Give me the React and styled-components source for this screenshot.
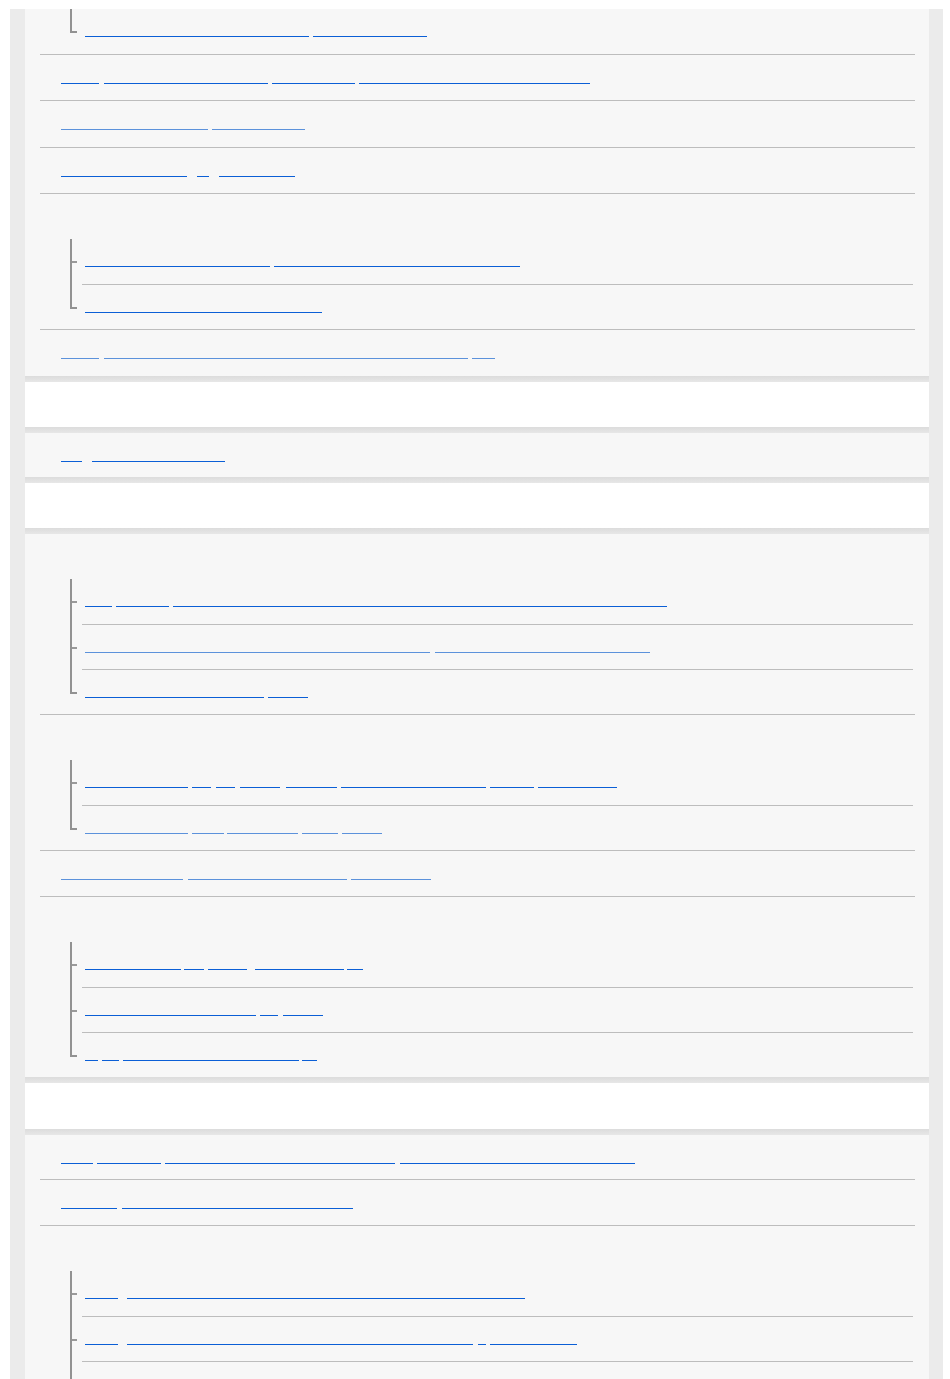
import React from "react";
import styled, { createGlobalStyle } from "styled-components";

const GlobalStyle = createGlobalStyle`
  html, body {
    margin: 0;
    padding: 0;
    background: #ffffff;
  }
  body {
    font-family: "Liberation Sans", Arial, sans-serif;
  }
`;

// tones of the link underline
const DARK = "#0b5fd6";
const LIGHT = "#5c92db";
const RULE = "#bdbdbd";

// x ranges of each underlined word, in page pixels
const sections = [
  {
    kind: "panel",
    items: [
      { type: "group", cropped: true, subs: [{ tone: DARK, words: [[85, 309], [313, 427]] }] },
      { type: "row", tone: DARK, words: [[61, 99], [104, 268], [272, 355], [359, 590]] },
      { type: "row", tone: LIGHT, words: [[61, 208], [212, 305]] },
      { type: "row", tone: DARK, words: [[61, 187], [197, 209], [219, 295]] },
      {
        type: "group",
        subs: [
          { tone: DARK, words: [[85, 270], [274, 520]] },
          { tone: DARK, words: [[85, 322]] },
        ],
      },
      { type: "row", tone: LIGHT, words: [[61, 99], [104, 468], [472, 495]] },
    ],
  },
  { kind: "header", height: 45 },
  {
    kind: "panel",
    items: [{ type: "row", tone: DARK, words: [[61, 82], [92, 225]] }],
  },
  { kind: "header", height: 45 },
  {
    kind: "panel",
    items: [
      {
        type: "group",
        subs: [
          { tone: DARK, words: [[85, 112], [116, 169], [173, 667]] },
          { tone: LIGHT, words: [[85, 430], [435, 650]] },
          { tone: DARK, words: [[85, 264], [268, 308]] },
        ],
      },
      {
        type: "group",
        subs: [
          {
            tone: DARK,
            words: [[85, 188], [192, 211], [216, 235], [240, 280], [286, 337], [341, 486], [490, 534], [538, 617]],
          },
          { tone: LIGHT, words: [[85, 188], [192, 224], [227, 298], [302, 338], [342, 382]] },
        ],
      },
      { type: "row", tone: LIGHT, words: [[61, 183], [188, 347], [351, 431]] },
      {
        type: "group",
        subs: [
          { tone: DARK, words: [[85, 181], [184, 204], [208, 247], [255, 344], [347, 363]] },
          { tone: DARK, words: [[85, 256], [260, 278], [283, 323]] },
          { tone: DARK, words: [[85, 98], [102, 119], [123, 299], [302, 317]] },
        ],
      },
    ],
  },
  { kind: "header", height: 46 },
  {
    kind: "panel",
    items: [
      { type: "row", tone: DARK, words: [[61, 93], [97, 161], [165, 395], [400, 635]] },
      { type: "row", tone: DARK, words: [[61, 117], [122, 353]] },
      {
        type: "group",
        subs: [
          { tone: DARK, words: [[85, 118], [127, 525]] },
          { tone: DARK, words: [[85, 118], [127, 473], [478, 486], [490, 577]] },
          { tone: DARK, words: [[85, 200]] },
        ],
      },
    ],
  },
];

const Page = styled.div`
  padding: 9px 0 0 10px;
`;

const Frame = styled.div`
  width: 933px;
  box-sizing: border-box;
  background: #ebebeb;
  padding: 0 14px 0 15px;
`;

const Bar = styled.div`
  height: 6px;
  background: linear-gradient(#dcdcdc, #e7e7e7);
`;

const Header = styled.div`
  height: ${(p) => p.$height}px;
  background: #ffffff;
`;

const Panel = styled.ul`
  list-style: none;
  margin: 0;
  padding: 0 14px 0 15px;
  background: #f7f7f7;
`;

const Row = styled.li`
  box-sizing: border-box;
  height: ${(p) => (p.$first ? "44px" : "46.4px")};
  padding: 28px 0 0 21px;
  border-top: ${(p) => (p.$first ? "none" : `1px solid ${RULE}`)};
`;

const Group = styled.li`
  border-top: ${(p) => (p.$first ? "none" : `1px solid ${RULE}`)};
`;

const GroupLabel = styled.div`
  height: 45px;
`;

const SubList = styled.ul`
  list-style: none;
  margin: 0 0 0 30px;
  padding: 0;
`;

const SubItem = styled.li`
  display: flex;
  height: 45px;
`;

const Branch = styled.div`
  flex: none;
  width: 12px;
  display: flex;
  flex-direction: column;
`;

const Stem = styled.div`
  box-sizing: border-box;
  border-left: 2px solid #929292;
  ${(p) =>
    p.$last
      ? `width: 7px; height: ${p.$tick + 2}px; border-bottom: 2px solid #929292;`
      : `flex: 1;`}
`;

const Tick = styled.div`
  width: 5px;
  height: 2px;
  margin-top: ${(p) => p.$tick}px;
  background: #999999;
`;

const SubBody = styled.div`
  flex: 1;
  box-sizing: border-box;
  margin-right: 2px;
  padding: 27px 0 0 3px;
  border-top: ${(p) => (p.$first ? "none" : `1px solid ${RULE}`)};
`;

const LinkLine = styled.div`
  display: flex;
  align-items: flex-start;
`;

const Word = styled.a`
  display: block;
  flex: none;
  height: 1px;
  background: ${(p) => p.$tone};
`;

function Words({ words, tone, base }) {
  let prev = base;
  return (
    <LinkLine>
      {words.map(([x0, x1], i) => {
        const gap = x0 - prev;
        prev = x1;
        return <Word key={i} href="#" $tone={tone} style={{ marginLeft: gap, width: x1 - x0 }} />;
      })}
    </LinkLine>
  );
}

function Sub({ sub, first, last }) {
  const tick = first ? 22 : 23;
  return (
    <SubItem>
      <Branch>
        {last ? (
          <Stem $last $tick={tick} />
        ) : (
          <Stem>
            <Tick $tick={tick} />
          </Stem>
        )}
      </Branch>
      <SubBody $first={first}>
        <Words words={sub.words} tone={sub.tone} base={85} />
      </SubBody>
    </SubItem>
  );
}

function PanelItem({ item, first }) {
  if (item.type === "row") {
    return (
      <Row $first={first}>
        <Words words={item.words} tone={item.tone} base={61} />
      </Row>
    );
  }
  return (
    <Group $first={first}>
      {!item.cropped && <GroupLabel />}
      <SubList>
        {item.subs.map((s, i) => (
          <Sub key={i} sub={s} first={i === 0} last={i === item.subs.length - 1} />
        ))}
      </SubList>
    </Group>
  );
}

export default function App() {
  return (
    <>
      <GlobalStyle />
      <Page>
        <Frame>
          {sections.map((s, i) =>
            s.kind === "header" ? (
              <React.Fragment key={i}>
                <Bar />
                <Header $height={s.height} />
                <Bar />
              </React.Fragment>
            ) : (
              <Panel key={i}>
                {s.items.map((item, j) => (
                  <PanelItem key={j} item={item} first={j === 0} />
                ))}
              </Panel>
            )
          )}
        </Frame>
      </Page>
    </>
  );
}
